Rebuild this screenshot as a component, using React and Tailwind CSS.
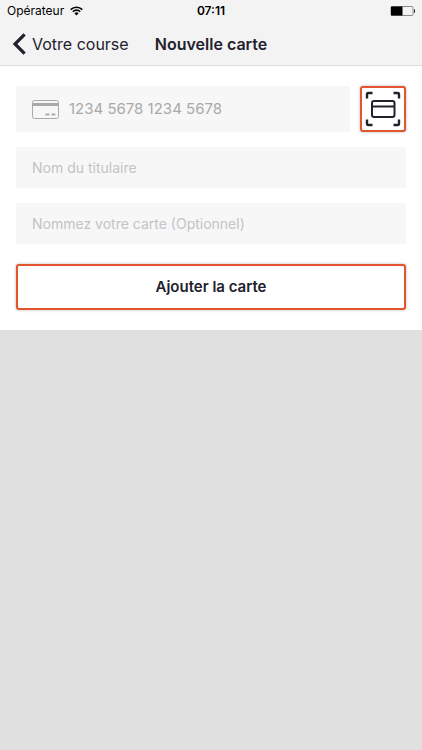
import React, { useState } from "react";

const StatusBar = () => (
  <div className="grid grid-cols-3 items-center h-[22px] px-[7px] text-[12px] text-black">
    <div className="flex items-center gap-[6px]">
      <span>Opérateur</span>
      <svg width="13" height="10" viewBox="0 0 13 10" fill="none" stroke="#000" strokeWidth="1.6">
        <path d="M0.7 3.6a8.2 8.2 0 0 1 11.6 0" />
        <path d="M2.8 5.7a5.2 5.2 0 0 1 7.4 0" />
        <path d="M6.5 9.4L4.4 7.3a3 3 0 0 1 4.2 0z" fill="#000" stroke="none" />
      </svg>
    </div>
    <span className="text-center font-semibold">07:11</span>
    <svg className="justify-self-end" width="25" height="11" viewBox="0 0 25 11">
      <rect x="1" y="0.5" width="22" height="9" rx="1" fill="none" stroke="#8a8a8a" />
      <rect x="1" y="0.5" width="11.5" height="9" rx="0.5" fill="#000" />
      <path d="M24 3.2v3.6a1.8 1.8 0 0 0 0-3.6z" fill="#222" />
    </svg>
  </div>
);

const NavBar = () => (
  <div className="grid grid-cols-[1fr_auto_1fr] items-center h-[43px] px-3 text-[16px] text-[#22202c]">
    <button type="button" className="flex items-center gap-[6px] whitespace-nowrap cursor-pointer">
      <svg width="14" height="22" viewBox="0 0 14 22" fill="none" stroke="#22202c" strokeWidth="3.2">
        <path d="M12.6 1.4L3 11l9.6 9.6" />
      </svg>
      Votre course
    </button>
    <h1 className="font-semibold">Nouvelle carte</h1>
  </div>
);

const CardIcon = () => (
  <svg className="shrink-0" width="27" height="19" viewBox="0 0 27 19">
    <rect x="0.5" y="0.5" width="26" height="18" rx="2" fill="none" stroke="#a9a9a9" />
    <rect x="1" y="3" width="25" height="3" fill="#a9a9a9" />
    <path d="M13.500 14.500h3.800M19.500 14.500h3.800" stroke="#a9a9a9" strokeWidth="2" />
  </svg>
);

const ScanIcon = () => (
  <svg width="36" height="36" viewBox="0 0 36 36" fill="none" stroke="#22202c" strokeWidth="2.400">
    <path d="M2 7.500V3.500A1.500 1.500 0 0 1 3.500 2H7.500M28.500 2h4A1.500 1.500 0 0 1 34 3.500v4M34 28.500v4a1.500 1.500 0 0 1-1.500 1.500h-4M7.500 34h-4A1.500 1.500 0 0 1 2 32.500v-4" />
    <rect x="7" y="10" width="22.500" height="16" rx="2" strokeWidth="2" />
    <path d="M7 15.500h22.500" strokeWidth="2" />
  </svg>
);

const App = () => {
  const [card, setCard] = useState({ number: "", holder: "", label: "" });

  const handleChange = (e) => {
    setCard({ ...card, [e.target.name]: e.target.value });
  };

  return (
    <div className="min-h-screen bg-[#e0e0e0] font-['Inter',sans-serif]">
      <header className="bg-[#f3f3f3] border-b border-[#dcdcdc]">
        <StatusBar />
        <NavBar />
      </header>

      <form
        onSubmit={(e) => e.preventDefault()}
        className="flex flex-col gap-[15px] bg-white px-4 py-5 text-[14px]"
      >
        <div className="flex gap-[10px]">
          <label className="flex flex-1 items-center gap-[10px] h-[46px] px-4 bg-[#f7f7f7]">
            <CardIcon />
            <input
              name="number"
              inputMode="numeric"
              aria-label="Numéro de carte"
              placeholder="1234 5678 1234 5678"
              value={card.number}
              onChange={handleChange}
              className="flex-1 min-w-0 outline-none text-[15px] text-[#22202c] placeholder:text-[#a9a9a9]"
            />
          </label>
          {/* Scan the card with the camera */}
          <button
            type="button"
            aria-label="Scanner la carte"
            className="flex items-center justify-center w-[46px] h-[46px] bg-white border-2 border-[#e2552f] rounded-[3px] shadow-[0_0_3px_rgba(0,0,0,0.3)] cursor-pointer"
          >
            <ScanIcon />
          </button>
        </div>

        <input
          name="holder"
          aria-label="Nom du titulaire"
          placeholder="Nom du titulaire"
          value={card.holder}
          onChange={handleChange}
          className="h-[41px] px-4 bg-[#f7f7f7] outline-none text-[#22202c] placeholder:text-[#c3c3c8]"
        />
        <input
          name="label"
          aria-label="Nommez votre carte (Optionnel)"
          placeholder="Nommez votre carte (Optionnel)"
          value={card.label}
          onChange={handleChange}
          className="h-[41px] px-4 bg-[#f7f7f7] outline-none text-[#22202c] placeholder:text-[#c3c3c8]"
        />

        <button
          type="submit"
          className="mt-[5px] h-[46px] bg-white border-2 border-[#e2552f] rounded-[3px] shadow-[0_0_3px_rgba(0,0,0,0.3)] text-[15px] font-semibold text-[#22202c] cursor-pointer"
        >
          Ajouter la carte
        </button>
      </form>
    </div>
  );
};

export default App;
